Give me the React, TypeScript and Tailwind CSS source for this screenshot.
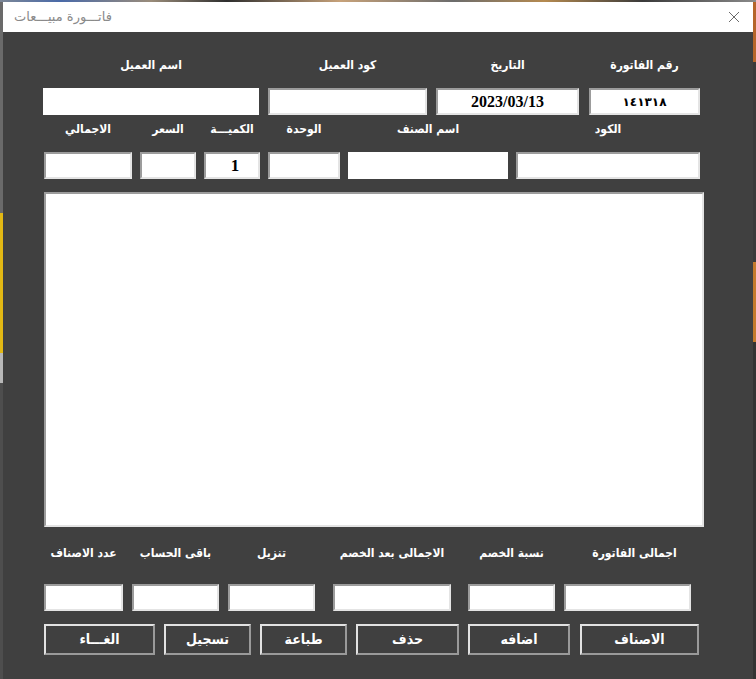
import React from "react"

const sunken =
  "border-2 border-t-[#9c9c9c] border-l-[#9c9c9c] border-b-[#e4e4e4] border-r-[#e4e4e4] bg-white"
const raised =
  "border-2 border-t-[#e2e2e2] border-l-[#e2e2e2] border-b-[#9a9a9a] border-r-[#9a9a9a]"
const arabic = "font-['DejaVu_Sans_Condensed','DejaVu_Sans',sans-serif]"
const serif = "font-['Liberation_Serif','DejaVu_Sans',serif]"

function Label({ text, w, ml, shift = "" }: { text: string; w: string; ml: string; shift?: string }) {
  return (
    <div
      dir="rtl"
      className={`${w} ${ml} ${shift} flex justify-center items-center text-white font-bold text-[12px] whitespace-nowrap ${arabic}`}
    >
      {text}
    </div>
  )
}

function Field({ w, ml, flat, children }: { w: string; ml: string; flat?: boolean; children?: React.ReactNode }) {
  return (
    <div
      className={`${w} ${ml} h-full flex items-center justify-center text-black font-bold ${
        flat ? "bg-white" : sunken
      }`}
    >
      {children}
    </div>
  )
}

function Btn({ text, w, ml }: { text: string; w: string; ml: string }) {
  return (
    <div
      dir="rtl"
      className={`${w} ${ml} h-full flex items-center justify-center text-white font-bold text-[14px] ${arabic} ${raised}`}
    >
      {text}
    </div>
  )
}

export default function App() {
  return (
    <div className="w-[756px] h-[679px] flex flex-col bg-[#505050] overflow-hidden">
      <div className="h-[2px] bg-[linear-gradient(90deg,#7c8797_0%,#4a6aa8_8%,#9a8c7a_20%,#2e2e2e_30%,#c7a27a_45%,#6c6c6c_60%,#b58a50_72%,#3a3a3a_85%,#8a8a8a_100%)]" />
      <div className="flex flex-1">
        <div className="w-[3px] flex flex-col">
          <div className="h-[211px] bg-[#6a6a6a]" />
          <div className="h-[140px] bg-[#e2b814]" />
          <div className="h-[30px] bg-[#b8b8b8]" />
          <div className="flex-1 bg-[#4e4e4e]" />
        </div>
        <div className="w-[750px] flex flex-col">
          <div className="h-[30px] bg-white flex items-center justify-between px-[11px]">
            <span dir="rtl" className="text-[13px] text-[#8a8a8a] font-['DejaVu_Sans',sans-serif]">
              فاتـــورة مبيـــعات
            </span>
            <svg width="12" height="12" viewBox="0 0 12 12" className="mr-[2px]">
              <path d="M1 1L11 11M11 1L1 11" stroke="#6b6b6b" strokeWidth="1" />
            </svg>
          </div>
          <div className="flex-1 bg-[#404040] flex flex-col pt-[23px]">
            <div className="h-[20px] flex">
              <Label text="اسم العميل" w="w-[216px]" ml="ml-[40px]" />
              <Label text="كود العميل" w="w-[159px]" ml="ml-[9px]" />
              <Label text="التاريخ" w="w-[143px]" ml="ml-[9px]" />
              <Label text="رقم الفاتورة" w="w-[111px]" ml="ml-[10px]" />
            </div>
            <div className="h-[27px] mt-[13px] flex">
              <Field w="w-[216px]" ml="ml-[40px]" flat />
              <Field w="w-[159px]" ml="ml-[9px]" />
              <Field w="w-[143px]" ml="ml-[9px]">
                <span className={`${serif} text-[16px]`}>2023/03/13</span>
              </Field>
              <Field w="w-[111px]" ml="ml-[10px]">
                <span className="font-['DejaVu_Sans',sans-serif] text-[12px] tracking-[2px]">١٤١٣١٨</span>
              </Field>
            </div>
            <div className="h-[20px] mt-[4px] flex">
              <Label text="الاجمالي" w="w-[88px]" ml="ml-[41px]" />
              <Label text="السعر" w="w-[56px]" ml="ml-[8px]" />
              <Label text="الكميـــة" w="w-[56px]" ml="ml-[8px]" />
              <Label text="الوحدة" w="w-[72px]" ml="ml-[8px]" />
              <Label text="اسم الصنف" w="w-[160px]" ml="ml-[8px]" />
              <Label text="الكود" w="w-[184px]" ml="ml-[8px]" />
            </div>
            <div className="h-[27px] mt-[13px] flex">
              <Field w="w-[88px]" ml="ml-[41px]" />
              <Field w="w-[56px]" ml="ml-[8px]" />
              <Field w="w-[56px]" ml="ml-[8px]">
                <span className={`${serif} text-[17px] ml-[6px]`}>1</span>
              </Field>
              <Field w="w-[72px]" ml="ml-[8px]" />
              <Field w="w-[160px]" ml="ml-[8px]" flat />
              <Field w="w-[184px]" ml="ml-[8px]" />
            </div>
            <div className={`h-[335px] w-[660px] ml-[41px] mt-[13px] ${sunken}`} />
            <div className="h-[20px] mt-[16px] flex">
              <Label text="عدد الاصناف" w="w-[79px]" ml="ml-[41px]" />
              <Label text="باقى الحساب" w="w-[87px]" ml="ml-[9px]" />
              <Label text="تنزيل" w="w-[87px]" ml="ml-[9px]" />
              <Label text="الاجمالى بعد الخصم" w="w-[118px]" ml="ml-[18px]" />
              <Label text="نسبة الخصم" w="w-[87px]" ml="ml-[17px]" />
              <Label text="اجمالى الفاتورة" w="w-[127px]" ml="ml-[9px]" shift="translate-x-[7px]" />
            </div>
            <div className="h-[27px] mt-[21px] flex">
              <Field w="w-[79px]" ml="ml-[41px]" />
              <Field w="w-[87px]" ml="ml-[9px]" />
              <Field w="w-[87px]" ml="ml-[9px]" />
              <Field w="w-[118px]" ml="ml-[18px]" />
              <Field w="w-[87px]" ml="ml-[17px]" />
              <Field w="w-[127px]" ml="ml-[9px]" />
            </div>
            <div className="h-[31px] mt-[13px] flex">
              <Btn text="الغـــاء" w="w-[111px]" ml="ml-[41px]" />
              <Btn text="تسجيل" w="w-[87px]" ml="ml-[9px]" />
              <Btn text="طباعة" w="w-[87px]" ml="ml-[9px]" />
              <Btn text="حذف" w="w-[103px]" ml="ml-[9px]" />
              <Btn text="اضافه" w="w-[102px]" ml="ml-[9px]" />
              <Btn text="الاصناف" w="w-[119px]" ml="ml-[10px]" />
            </div>
          </div>
        </div>
        <div className="w-[3px] flex flex-col">
          <div className="h-[60px] bg-[#b5652a]" />
          <div className="h-[200px] bg-[#3a3a3a]" />
          <div className="h-[80px] bg-[#c47a2c]" />
          <div className="flex-1 bg-[#333333]" />
        </div>
      </div>
    </div>
  )
}
